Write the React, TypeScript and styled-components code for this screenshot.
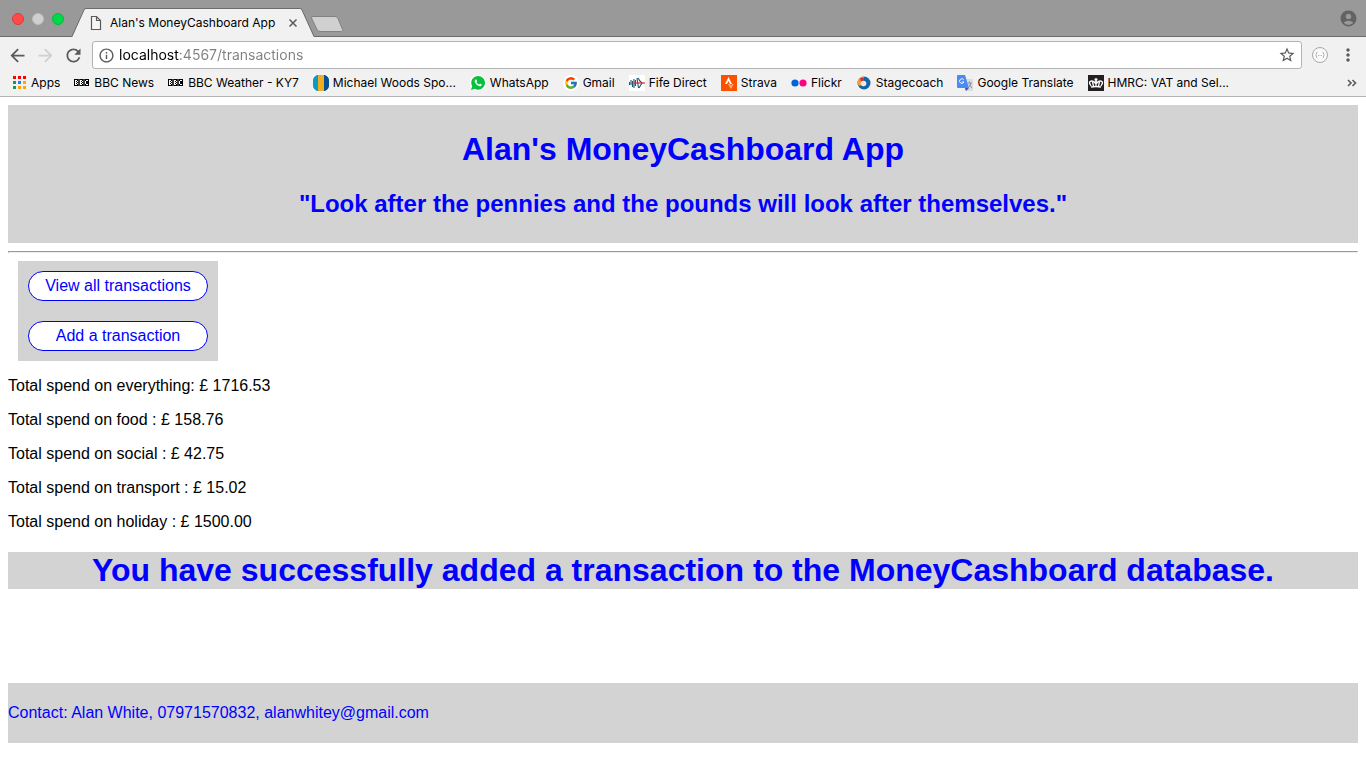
import React, { useState } from "react";
import styled, { createGlobalStyle } from "styled-components";
import {
  MdArrowBack,
  MdArrowForward,
  MdRefresh,
  MdInfoOutline,
  MdStarBorder,
  MdMoreVert,
  MdAccountCircle,
} from "react-icons/md";
import { FcGoogle } from "react-icons/fc";
import { IoLogoWhatsapp } from "react-icons/io";

const GlobalStyle = createGlobalStyle`
  * { box-sizing: border-box; }
  html, body { margin: 0; background: #fff; }
`;

/* ---------- browser window ---------- */

const Chrome = styled.header`
  font: 12px/16px Inter, "Noto Sans", sans-serif;
  color: #000;
  background: #f1f1f1;
  border-bottom: 1px solid #b4b4b4;
`;

const TabStrip = styled.div`
  display: flex;
  height: 37px;
  padding: 0 8px 0 12px;
  background: #999;
  box-shadow: inset 0 -1px #6b6b6b;
`;

const Lights = styled.div`
  display: flex;
  gap: 8px;
  padding-top: 13px;
  width: 60px;
`;

const Light = styled.button<{ $fill: string; $edge: string }>`
  width: 12px;
  height: 12px;
  padding: 0;
  border: 1px solid ${(p) => p.$edge};
  border-radius: 50%;
  background: ${(p) => p.$fill};
`;

const Tab = styled.div`
  position: relative;
  display: flex;
  align-items: center;
  width: 242px;
  height: 37px;
  padding: 9px 16px 0 18px;
`;

const TabShape = styled.svg`
  position: absolute;
  left: 0;
  top: 0;
`;

const TabContent = styled.div`
  position: relative;
  display: flex;
  flex: 1;
  align-items: center;
`;

const TabTitle = styled.span`
  flex: 1;
  margin-left: 8px;
  white-space: nowrap;
`;

const IconButton = styled.button<{ $color?: string }>`
  display: flex;
  flex: none;
  align-items: center;
  justify-content: center;
  padding: 0;
  border: 0;
  background: none;
  color: ${(p) => p.$color ?? "#5a5a5a"};
`;

const NewTab = styled(IconButton)`
  align-self: flex-start;
  margin: 15px auto 0 -4px;
`;

const Toolbar = styled.form`
  display: flex;
  align-items: center;
  height: 33px;
  margin: 0;
  padding: 3px 8px 0 7px;
`;

const NavButtons = styled.div`
  display: flex;
  gap: 7px;
  width: 85px;
`;

const Omnibox = styled.div`
  display: flex;
  flex: 1;
  align-items: center;
  height: 28px;
  padding: 0 5px;
  background: #fff;
  border: 1px solid #b4b4b4;
  border-radius: 3px;
`;

const Address = styled.input`
  flex: 1;
  min-width: 0;
  height: 20px;
  margin-left: 4px;
  padding: 0;
  border: 0;
  outline: 0;
  font: 14px/20px Inter, sans-serif;
  color: transparent;
  background: linear-gradient(90deg, #000 61px, #808080 61px);
  background-clip: text;
  -webkit-background-clip: text;
`;

const Extensions = styled.div`
  display: flex;
  align-items: center;
  gap: 10px;
  margin-left: 10px;
`;

const BookmarkBar = styled.nav`
  display: flex;
  align-items: center;
  gap: 14px;
  height: 26px;
  padding: 0 8px 0 11px;
`;

const Bookmark = styled.a`
  display: flex;
  flex: none;
  align-items: center;
  gap: 4px;
  color: inherit;
  text-decoration: none;
  white-space: nowrap;
`;

const Overflow = styled(IconButton)`
  margin-left: auto;
`;

/* ---------- page ---------- */

const Page = styled.div`
  margin: 8px;
  font: 16px/18px "Liberation Sans", Arial, sans-serif;
  color: #000;
`;

const Banner = styled.header`
  padding: 26px 0;
  background: lightgray;
  color: blue;
  text-align: center;
`;

const Title = styled.h1`
  margin: 0;
  font-size: 32px;
  line-height: 37px;
`;

const Motto = styled.h2`
  margin: 22px 0 0;
  font-size: 24px;
  line-height: 27px;
`;

const Menu = styled.nav`
  display: flex;
  flex-direction: column;
  gap: 20px;
  width: 200px;
  margin: 8px 10px 16px;
  padding: 10px;
  background: lightgray;
`;

const MenuButton = styled.button`
  height: 30px;
  padding: 0;
  border: 1px solid blue;
  border-radius: 15px;
  background: #fff;
  color: blue;
  font: inherit;
`;

const Total = styled.p`
  margin: 0 0 16px;
`;

const Notice = styled(Title)`
  margin: 21px 0 94px;
  background: lightgray;
  color: blue;
  text-align: center;
`;

const Footer = styled.footer`
  height: 60px;
  padding-top: 21px;
  background: lightgray;
  color: blue;
`;

/* ---------- bookmark icons ---------- */

const Icon = ({ children }: { children: React.ReactNode }) => (
  <svg width="16" height="16" viewBox="0 0 16 16" aria-hidden="true">
    {children}
  </svg>
);

const appColors = ["#f00", "#f00", "#f00", "#0a9d58", "#1a82f7", "#fba800", "#0a9d58", "#fba800", "#fba800"];

const AppsIcon = () => (
  <Icon>
    {appColors.map((c, i) => (
      <rect key={i} x={2 + (i % 3) * 5} y={1 + Math.floor(i / 3) * 5} width="3" height="3" fill={c} />
    ))}
  </Icon>
);

const BbcIcon = () => (
  <Icon>
    <g shapeRendering="crispEdges">
      <path d="M0 4h15v7H0z" fill="#000" />
      <path
        d="M1 5h2v1H2v1h1v1H2v1h1v1H1zM3 6h1v1H3zM3 8h1v1H3zM6 5h2v1H7v1h1v1H7v1h1v1H6zM8 6h1v1H8zM8 8h1v1H8zM12 5h2v1h-2v3h2v1h-2V9h-1V6h1z"
        fill="#fff"
      />
    </g>
    <path d="M5 4v7M10 4v7" stroke="#f1f1f1" strokeWidth=".5" />
  </Icon>
);

const WoodsIcon = () => (
  <Icon>
    <path d="M0 0h16v16H0z" fill="#fff" />
    <path d="M5 0H4Q0 2 0 5v6q0 3 4 5h1z" fill="#0b9bc0" />
    <path d="M5 0h6v16H5z" fill="#f0ad22" />
    <path d="M11 0h1q4 2 4 5v6q0 3-4 5h-1z" fill="#08508c" />
  </Icon>
);

const WhatsAppIcon = () => (
  <Icon>
    <rect width="16" height="16" rx="7" fill="#fff" />
    <IoLogoWhatsapp size={16} color="#06c13c" />
  </Icon>
);

const GoogleIcon = () => (
  <Icon>
    <circle cx="8" cy="8" r="8" fill="#fff" />
    <FcGoogle x="1" y="1" size={14} />
  </Icon>
);

const FifeIcon = () => (
  <Icon>
    <path d="M0 0h16v16H0z" fill="#fff" />
    <path
      d="M.500 7v3M2 5v5M3.500 6v6M5 4v9M6.500 5v6M8 3l1.500 10M10 5l3 3-3 5M9 3l2 3"
      fill="none"
      stroke="#1d5878"
      strokeWidth="1.100"
    />
    <path d="M5 8h11" stroke="#e8202c" strokeWidth="1.200" />
  </Icon>
);

const StravaIcon = () => (
  <Icon>
    <path d="M0 0h16v16H0z" fill="#fc5200" />
    <path d="M7.500 2L11 9H9L7.500 6 6 9H4z" fill="#fff" />
    <path d="M7 9h2l1 2 1-2h1.500L10 14z" fill="#ffb08a" />
  </Icon>
);

const FlickrIcon = () => (
  <Icon>
    <circle cx="4" cy="8" r="3.600" fill="#0063dc" />
    <circle cx="12" cy="8" r="3.600" fill="#ff0084" />
  </Icon>
);

const StagecoachIcon = () => (
  <Icon>
    <circle cx="8" cy="8" r="6.500" fill="#1465a8" />
    <path d="M8 1.500Q2 2 1.500 8q.5 2 2 3L8 8z" fill="#f59a3a" />
    <path d="M4 3.500Q6 2 8 3v5L5 7z" fill="#d3352b" />
    <circle cx="7.500" cy="8.500" r="2.800" fill="#fbe9dc" />
  </Icon>
);

const TranslateIcon = () => (
  <Icon>
    <path d="M6 4h9q1 0 1 1v10q0 1-1 1H8z" fill="#dcdcdc" />
    <path d="M1 0h7l4 13H1q-1 0-1-1V1q0-1 1-1z" fill="#4a8af4" />
    <path d="M8 13h4l-3 3z" fill="#3453b8" />
    <path d="M6.800 4.800A2.300 2.300 0 1 0 7 7H5" fill="none" stroke="#fff" />
    <path d="M10.500 8H15M12.500 6.500V8M14 8q-1 4-3 5M12 9.500l3 3.500" fill="none" stroke="#7b8a96" strokeWidth=".9" />
  </Icon>
);

const CrownIcon = () => (
  <Icon>
    <path d="M0 0h16v16H0z" fill="#231f20" />
    <path
      d="M3 11L1.500 8q0-2 2.500-2 2 0 4 3 2-3 4-3 2.500 0 2.500 2L13 11M8 5v6M4.500 7l1 4M11.500 7l-1 4"
      fill="none"
      stroke="#fff"
      strokeWidth="1.300"
    />
    <path d="M8 3v4M6.500 4.500h3M3 12q5-1 10 0" fill="none" stroke="#fff" strokeWidth="1.300" />
  </Icon>
);

const bookmarks: [string, () => React.ReactElement][] = [
  ["Apps", AppsIcon],
  ["BBC News", BbcIcon],
  ["BBC Weather - KY7", BbcIcon],
  ["Michael Woods Spo...", WoodsIcon],
  ["WhatsApp", WhatsAppIcon],
  ["Gmail", GoogleIcon],
  ["Fife Direct", FifeIcon],
  ["Strava", StravaIcon],
  ["Flickr", FlickrIcon],
  ["Stagecoach", StagecoachIcon],
  ["Google Translate", TranslateIcon],
  ["HMRC: VAT and Sel...", CrownIcon],
];

const totals = [
  "Total spend on everything: £ 1716.53",
  "Total spend on food : £ 158.76",
  "Total spend on social : £ 42.75",
  "Total spend on transport : £ 15.02",
  "Total spend on holiday : £ 1500.00",
];

function BrowserChrome() {
  const [url, setUrl] = useState("localhost:4567/transactions");
  return (
    <Chrome>
      <TabStrip>
        <Lights>
          <Light aria-label="Close window" $fill="#ff4a4a" $edge="#e2393b" />
          <Light aria-label="Minimise window" $fill="#d0d0d0" $edge="#bcbcbc" />
          <Light aria-label="Zoom window" $fill="#00d84a" $edge="#00bd3c" />
        </Lights>
        <Tab>
          <TabShape width="242" height="37" viewBox="0 0 242 37" aria-hidden="true">
            <path d="M0 37L12 10Q12.500 8.500 14 8.500H228Q229.500 8.500 230 10L242 37z" fill="#f1f1f1" />
            <path d="M0 36.500L12 10Q12.500 8.500 14 8.500H228Q229.500 8.500 230 10L242 36.500" fill="none" stroke="#6b6b6b" />
          </TabShape>
          <TabContent>
            <svg width="12" height="16" viewBox="0 0 12 16" aria-hidden="true">
              <path d="M1.500 1.500h5l4 4v9h-9zM6.500 1.500v4h4" fill="#f6f6f6" stroke="#5a5a5a" strokeWidth="1.200" />
            </svg>
            <TabTitle>Alan's MoneyCashboard App</TabTitle>
            <IconButton aria-label="Close tab">
              <svg width="10" height="10" viewBox="0 0 10 10">
                <path d="M1.500 1.500l7 7M8.500 1.500l-7 7" stroke="#5a5a5a" strokeWidth="1.500" />
              </svg>
            </IconButton>
          </TabContent>
        </Tab>
        <NewTab aria-label="New tab">
          <svg width="34" height="18" viewBox="0 0 34 18">
            <path d="M3 1.500h22q2 0 3 2l4.500 11q.5 2-1 2H10q-2 0-3-2L1.500 3q-.5-1.500 1.500-1.500z" fill="#d0d0d0" stroke="#828282" />
          </svg>
        </NewTab>
        <IconButton aria-label="Profile" $color="#636363">
          <MdAccountCircle size={19} />
        </IconButton>
      </TabStrip>

      <Toolbar onSubmit={(e) => e.preventDefault()}>
        <NavButtons>
          <IconButton type="button" aria-label="Back">
            <MdArrowBack size={21} />
          </IconButton>
          <IconButton type="button" aria-label="Forward" $color="#d0d0d0">
            <MdArrowForward size={21} />
          </IconButton>
          <IconButton type="button" aria-label="Reload">
            <MdRefresh size={21} />
          </IconButton>
        </NavButtons>
        <Omnibox>
          <IconButton type="button" aria-label="Site information">
            <MdInfoOutline size={17} />
          </IconButton>
          <Address aria-label="Address" value={url} spellCheck={false} onChange={(e) => setUrl(e.target.value)} />
          <IconButton type="button" aria-label="Bookmark this page">
            <MdStarBorder size={18} />
          </IconButton>
        </Omnibox>
        <Extensions>
          <IconButton type="button" aria-label="JSON viewer">
            <svg width="16" height="16" viewBox="0 0 16 16">
              <circle cx="8" cy="8" r="7.500" fill="#fafafa" stroke="#a8a8a8" />
              <path d="M5.500 5q-1 0-1 1v1l-1 1 1 1v1q0 1 1 1M10.500 5q1 0 1 1v1l1 1-1 1v1q0 1-1 1" fill="none" stroke="#aaa" strokeWidth=".9" />
              <path d="M6 8.500h1M7.500 8.500h1M9 8.500h1" stroke="#aaa" strokeWidth=".8" />
            </svg>
          </IconButton>
          <IconButton type="button" aria-label="Menu">
            <MdMoreVert size={20} />
          </IconButton>
        </Extensions>
      </Toolbar>

      <BookmarkBar aria-label="Bookmarks">
        {bookmarks.map(([label, Glyph]) => (
          <Bookmark key={label} href="#">
            <Glyph />
            {label}
          </Bookmark>
        ))}
        <Overflow aria-label="More bookmarks">
          <svg width="12" height="10" viewBox="0 0 12 10">
            <path d="M2 2l3 3-3 3M6.500 2l3 3-3 3" fill="none" stroke="#5a5a5a" strokeWidth="1.600" />
          </svg>
        </Overflow>
      </BookmarkBar>
    </Chrome>
  );
}

export default function App() {
  return (
    <>
      <GlobalStyle />
      <BrowserChrome />
      <Page>
        <Banner>
          <Title>Alan's MoneyCashboard App</Title>
          <Motto>"Look after the pennies and the pounds will look after themselves."</Motto>
        </Banner>
        <hr />
        <Menu>
          <MenuButton>View all transactions</MenuButton>
          <MenuButton>Add a transaction</MenuButton>
        </Menu>
        <main>
          {totals.map((line) => (
            <Total key={line}>{line}</Total>
          ))}
          <Notice>You have successfully added a transaction to the MoneyCashboard database.</Notice>
        </main>
        <Footer>Contact: Alan White, 07971570832, alanwhitey@gmail.com</Footer>
      </Page>
    </>
  );
}
